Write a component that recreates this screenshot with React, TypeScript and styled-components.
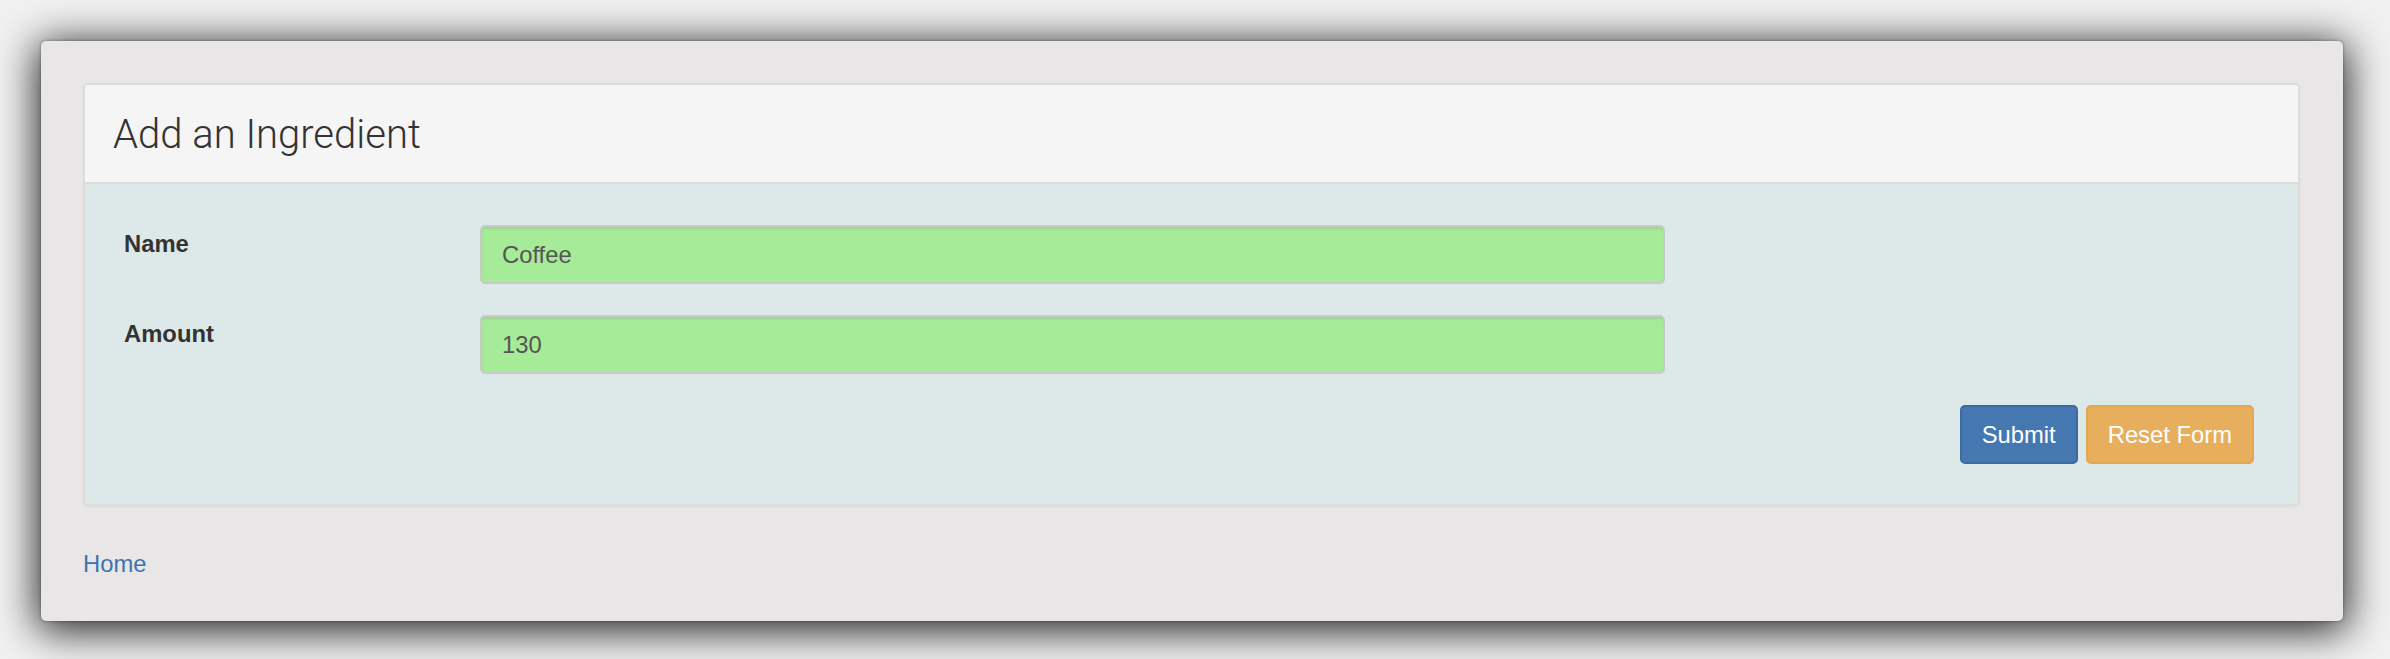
import React from "react";
import styled, { createGlobalStyle } from "styled-components";

const GlobalStyle = createGlobalStyle`
  html, body {
    margin: 0;
    padding: 0;
    background: #f0f0f0;
    font-family: "Liberation Sans", Arial, sans-serif;
  }
  * { box-sizing: border-box; }
`;

const Page = styled.div`
  padding: 41px 47px 37px 41px;
  height: 659px;
  background: #f1f1f1;
`;

const Window = styled.div`
  background: #e8e6e7;
  border-radius: 5px;
  box-shadow: 0 6px 40px 4px rgba(0, 0, 0, 0.85), 0 0 3px rgba(0, 0, 0, 0.4);
  padding: 42px 43px 40px 42px;
`;

const Panel = styled.section`
  border: 2px solid #dcdcdc;
  border-radius: 5px;
  overflow: hidden;
  box-shadow: 0 1px 2px rgba(0, 0, 0, 0.05);
`;

const PanelHeading = styled.header`
  background: #f5f5f5;
  border-bottom: 2px solid #dddddd;
  height: 99px;
  display: flex;
  align-items: center;
  padding: 2px 28px 0;
`;

const Title = styled.h3`
  margin: 0;
  font-family: Roboto, "Liberation Sans", sans-serif;
  font-weight: 300;
  font-size: 40px;
  line-height: 1.1;
  color: #333333;
`;

const PanelBody = styled.div`
  background: #dde9e8;
  padding: 41px 44px 40px 39px;
  display: flex;
  flex-direction: column;
  gap: 31px;
`;

const FormRow = styled.div`
  display: grid;
  grid-template-columns: 356px 1185px;
  align-items: start;
`;

const Label = styled.label`
  font-weight: bold;
  font-size: 23.8px;
  line-height: 34px;
  color: #333333;
  padding-top: 2px;
`;

const Input = styled.input`
  height: 59px;
  width: 100%;
  border: 2px solid #c9cbc9;
  border-radius: 5px;
  background: #a6eb98;
  color: #555555;
  font-family: "Liberation Sans", Arial, sans-serif;
  font-size: 23.8px;
  padding: 0 20px;
  box-shadow: inset 0 2px 2px rgba(0, 0, 0, 0.08);
  outline: none;
`;

const ButtonRow = styled.div`
  display: flex;
  justify-content: flex-end;
  gap: 8px;
`;

const Button = styled.button<{ $variant: "primary" | "warning" }>`
  height: 59px;
  padding: 0 20px;
  border-radius: 5px;
  font-family: "Liberation Sans", Arial, sans-serif;
  font-size: 23.8px;
  color: #ffffff;
  cursor: pointer;
  border: 2px solid ${(p) => (p.$variant === "primary" ? "#3b69a0" : "#e4a64f")};
  background: ${(p) => (p.$variant === "primary" ? "#4578b1" : "#e7af5d")};
`;

const HomeLink = styled.a`
  display: block;
  margin-top: 41px;
  font-size: 23.8px;
  line-height: 34px;
  color: #3f73b0;
  text-decoration: none;
`;

export default function App() {
  return (
    <>
      <GlobalStyle />
      <Page>
        <Window>
          <Panel>
            <PanelHeading>
              <Title>Add an Ingredient</Title>
            </PanelHeading>
            <PanelBody>
              <FormRow>
                <Label htmlFor="name">Name</Label>
                <Input id="name" defaultValue="Coffee" />
              </FormRow>
              <FormRow>
                <Label htmlFor="amount">Amount</Label>
                <Input id="amount" defaultValue="130" />
              </FormRow>
              <ButtonRow>
                <Button $variant="primary">Submit</Button>
                <Button $variant="warning">Reset Form</Button>
              </ButtonRow>
            </PanelBody>
          </Panel>
          <HomeLink href="#">Home</HomeLink>
        </Window>
      </Page>
    </>
  );
}
